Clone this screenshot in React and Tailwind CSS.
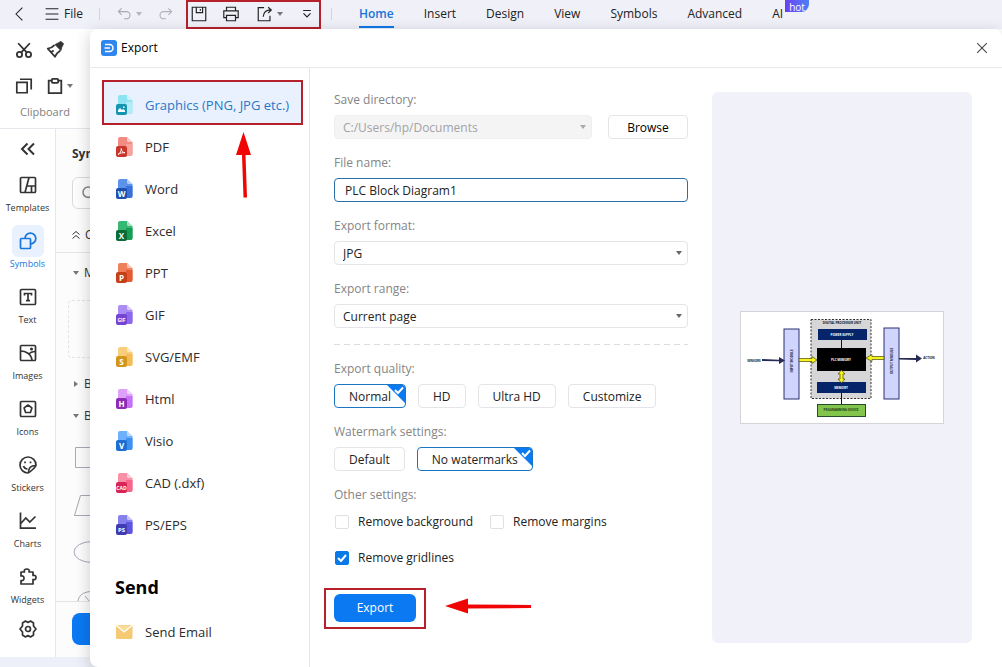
import { useState } from 'react'

const tabs = ['Home', 'Insert', 'Design', 'View', 'Symbols', 'Advanced', 'AI']

const formats = [
  { name: 'Graphics (PNG, JPG etc.)', mark: 'image', page: '#8ee3f3', side: '#b4ebf7', badge: '#1595b0' },
  { name: 'PDF', mark: 'pdf', page: '#f28b82', side: '#f6a39b', badge: '#c9372c' },
  { name: 'Word', mark: 'W', page: '#5b93ea', side: '#3a72d8', badge: '#1d4fb0' },
  { name: 'Excel', mark: 'X', page: '#35b871', side: '#169c53', badge: '#0a6b37' },
  { name: 'PPT', mark: 'P', page: '#f0805c', side: '#e55a30', badge: '#c63f1b' },
  { name: 'GIF', mark: 'GIF', page: '#ab8cf3', side: '#8d68ea', badge: '#7445d3' },
  { name: 'SVG/EMF', mark: 'S', page: '#f8ce7c', side: '#f3bc59', badge: '#d4951d' },
  { name: 'Html', mark: 'H', page: '#dda0fb', side: '#c572f4', badge: '#8c2bb5' },
  { name: 'Visio', mark: 'V', page: '#6fb0fa', side: '#3f8ff0', badge: '#1c6ed0' },
  { name: 'CAD (.dxf)', mark: 'CAD', page: '#fa8fa8', side: '#f5668a', badge: '#d92457' },
  { name: 'PS/EPS', mark: 'PS', page: '#8580ee', side: '#5c55dd', badge: '#403bb3' },
]

function Icon({ size = 20, stroke = 1.7, className = '', children }) {
  return (
    <svg
      width={size}
      height={size}
      viewBox="0 0 20 20"
      fill="none"
      stroke="currentColor"
      strokeWidth={stroke}
      className={`shrink-0 ${className}`}
    >
      {children}
    </svg>
  )
}

function Caret({ className = 'text-[#777]' }) {
  return (
    <svg width="6" height="4" viewBox="0 0 6 4" className={`shrink-0 ${className}`}>
      <path d="M0 0h6L3 4z" fill="currentColor" />
    </svg>
  )
}

const tools = [
  {
    name: 'Templates',
    icon: (
      <>
        <rect x="2.5" y="2.5" width="15" height="15" rx="1" />
        <path d="M11 2.5 7 17.5M9 11h8.5M13.5 11v6.5" />
      </>
    ),
  },
  {
    name: 'Symbols',
    icon: (
      <>
        <rect x="2.5" y="7.5" width="10" height="10" rx="1" />
        <path d="M7 7.5a5.4 5.4 0 1 1 5.6 5.4" />
      </>
    ),
  },
  {
    name: 'Text',
    icon: (
      <>
        <rect x="2.5" y="2.5" width="15" height="15" rx="1" />
        <path d="M6.5 8.5v-2h7v2M10 6.5v7M8 13.7h4" />
      </>
    ),
  },
  {
    name: 'Images',
    icon: (
      <>
        <rect x="2.5" y="2.5" width="15" height="15" rx="1" />
        <path d="M2.5 8c5 0 11 3 11.5 9.5M10.5 11.5c1.5-2 4-3 7-3" />
        <circle cx="13.5" cy="6" r=".7" fill="currentColor" />
      </>
    ),
  },
  {
    name: 'Icons',
    icon: (
      <>
        <rect x="2.5" y="2.5" width="15" height="15" rx="1" />
        <path d="m10 6 3.9 2.9-1.5 4.6H7.6L6.1 8.9z" strokeLinejoin="round" />
      </>
    ),
  },
  {
    name: 'Stickers',
    icon: (
      <>
        <path d="M18 10a8 8 0 1 0-8 8c1 0 8-6 8-8z" />
        <path d="M10.5 17.5c0-5 2.5-7 7-7M5.5 11c.7 2 2 3 4 3" />
        <path d="M7 6.5v1.8M12.5 6.5v1.8" />
      </>
    ),
  },
  {
    name: 'Charts',
    icon: <path d="M2.5 1.5v15.7H18M2.8 12.5l5-5.5 4 4 5.7-5.5" />,
  },
  {
    name: 'Widgets',
    icon: (
      <path
        d="M3 5h3.5c-2-4 6.500-4 4.500 0H15v3.5c4-1.5 4 5.5 0 4V17H3v-3.500c4 1.500 4-6 0-4.500z"
        strokeLinejoin="round"
      />
    ),
  },
]

function FileIcon({ format }) {
  const { mark, page, side, badge } = format
  const letters = mark !== 'image' && mark !== 'pdf'
  return (
    <svg width="18" height="20" viewBox="0 0 18 20" className="shrink-0">
      <path d="M5 0h7l5.5 5v12a2 2 0 0 1-2 2H5a2 2 0 0 1-2-2V2a2 2 0 0 1 2-2z" fill={page} />
      <path d="M11 7h6.5v10a2 2 0 0 1-2 2H11z" fill={side} />
      <path d="M12 0v3.5A1.5 1.5 0 0 0 13.5 5h4z" fill="#fff" opacity=".55" />
      <rect x="1" y="9" width="11" height="11" rx="2" fill={badge} />
      {mark === 'image' && (
        <path d="M3 17v-2l2-2 2 2 1.2-1 1.8 1.5V17zM8 11.5h1.500V13H8z" fill="#fff" />
      )}
      {mark === 'pdf' && (
        <path d="M3 17.5c2-1 3.500-3.500 3.200-6 .5 3 1.800 4 3.800 4.300-2.500-.3-4.500 0-7 1.700" fill="none" stroke="#fff" strokeWidth=".9" />
      )}
      {letters && (
        <text
          x="6.5"
          y={mark.length > 1 ? 16.5 : 17.5}
          textAnchor="middle"
          fontSize={mark.length > 2 ? 5 : mark.length > 1 ? 6 : 8}
          fontWeight="700"
          fill="#fff"
        >
          {mark}
        </text>
      )}
    </svg>
  )
}

function TopBar() {
  return (
    <header className="flex h-[29px] items-start bg-[#eff0f8] text-[#222]">
      <div className="flex h-[27px] w-[186px] shrink-0 items-center pl-3">
        <button aria-label="Back">
          <Icon size={16} stroke={1.3}><path d="M13 2 5 10l8 8" /></Icon>
        </button>
        <button className="ml-4 flex items-center gap-1">
          <Icon size={16} stroke={1.4}><path d="M2 3.5h16M2 10h16M2 16.5h16" /></Icon>
          File
        </button>
        <span className="ml-4 h-3 w-px bg-[#d3d5dc]" />
        <button aria-label="Undo" className="ml-4 flex items-center gap-1 text-[#a9abb3]">
          <Icon size={16} stroke={1.4}><path d="M7 3 3 7l4 4M3 7h10a4.5 4.5 0 0 1 0 9h-3" /></Icon>
          <Caret className="text-[#b5b6bc]" />
        </button>
        <button aria-label="Redo" className="ml-4 text-[#b0b2ba]">
          <Icon size={16} stroke={1.4}><path d="m13 3 4 4-4 4M17 7H7a4.5 4.5 0 0 0 0 9h3" /></Icon>
        </button>
      </div>
      <div className="flex h-[29px] w-[135px] shrink-0 items-center border-2 border-[#b5202a] pr-1 pb-[2px] pl-[2px]">
        <button aria-label="Save">
          <Icon size={18} stroke={1.3}>
            <path d="M2.5 2.5h15v15h-15zM7 2.5v6h7v-6M11.5 4.5v2" />
          </Icon>
        </button>
        <button aria-label="Print" className="ml-[14px]">
          <Icon size={18} stroke={1.3}>
            <path d="M5 6.5v-4h10v4M5 14H2V6.5h16V14h-3M5 11.5h10v6H5z" />
          </Icon>
        </button>
        <button aria-label="Share" className="ml-4 flex items-center gap-[3px]">
          <Icon size={18} stroke={1.3}>
            <path d="M9 3H2.5v14.5h13V12M8 13c.5-5 3-7.500 8.500-7.500M13.500 2.500l3.500 3-3.500 3.500" />
          </Icon>
          <Caret />
        </button>
        <button aria-label="More" className="ml-[17px]">
          <Icon size={14} stroke={1.7}><path d="M4.5 5h11M5 9l5 5 5-5" /></Icon>
        </button>
      </div>
      <span className="mt-2 ml-[10px] h-3 w-px bg-[#d3d5dc]" />
      <nav className="ml-[27px] flex h-7 gap-[30px]">
        {tabs.map((tab, i) => (
          <a
            key={tab}
            href="#"
            className={
              i === 0
                ? 'flex items-center border-b-2 border-[#0d78e8] pt-[1px] font-semibold text-[#1675d6]'
                : 'relative flex items-center border-b-2 border-transparent pt-[1px]'
            }
          >
            {tab}
            {tab === 'AI' && (
              <span className="absolute top-0 left-[13px] h-3 rounded-b-lg rounded-bl-none bg-linear-to-r from-[#6a3df0] to-[#4d7cf8] px-1 text-[10px] leading-[14px] text-white">
                hot
              </span>
            )}
          </a>
        ))}
      </nav>
    </header>
  )
}

function Ribbon() {
  return (
    <div className="flex h-[100px] shrink-0 border-b border-[#e6e7ec] bg-white pt-3 pl-[15px] text-[#333]">
      <div className="flex flex-col">
        <div className="flex h-[18px] items-center gap-[13px]">
          <button aria-label="Cut">
            <Icon size={18} stroke={2}>
              <circle cx="5" cy="15" r="2.9" />
              <circle cx="15" cy="15" r="2.9" />
              <path d="M3.5 2.5 13 12.7M16.5 2.5 7 12.7" />
            </Icon>
          </button>
          <button aria-label="Format painter">
            <Icon size={18} stroke={2}>
              <path d="M9.5 4.5C7 7 5 8 2 8.500l8 9c1-3 3-5 6-7" strokeLinejoin="round" />
              <path d="m10 4 3-1.500L16.500.500l3 2.500-2 4-1 3.500z" fill="currentColor" strokeWidth="1" />
              <path d="m5.5 12.5 3-2" />
            </Icon>
          </button>
        </div>
        <div className="mt-[18px] flex h-[18px] items-center gap-[13px]">
          <button aria-label="Copy">
            <Icon size={18} stroke={1.9}>
              <path d="M2 6h11.5v11.5H2zM5.5 2.5H18V14" />
            </Icon>
          </button>
          <button aria-label="Paste" className="flex items-center gap-[3px]">
            <Icon size={18} stroke={2}>
              <path d="M6.5 4H3v14h14V4h-3.5" />
              <rect x="6.5" y="2" width="7" height="4.5" rx="1" />
            </Icon>
            <Caret />
          </button>
        </div>
        <span className="mt-[9px] pl-[5px] text-[11px] text-[#808080]">Clipboard</span>
      </div>
    </div>
  )
}

function ToolRail() {
  return (
    <aside className="flex w-14 shrink-0 flex-col items-center border-r border-[#e6e7ec] bg-white pt-[10px] text-[#333]">
      <button aria-label="Collapse">
        <Icon size={20} stroke={2}><path d="M9.5 4.5 4 10l5.5 5.5M16 4.5 10.5 10l5.5 5.5" /></Icon>
      </button>
      <div className="mt-[10px] flex flex-col">
        {tools.map(tool => (
          <button
            key={tool.name}
            className={`flex h-14 flex-col items-center text-[9px] ${tool.name === 'Symbols' ? 'text-[#1777dc]' : ''}`}
          >
            <span
              className={`flex h-8 w-8 items-center justify-center rounded-md ${tool.name === 'Symbols' ? 'bg-[#e8f1fd]' : ''}`}
            >
              <Icon>{tool.icon}</Icon>
            </span>
            <span className="leading-[14px]">{tool.name}</span>
          </button>
        ))}
      </div>
      <button aria-label="Settings" className="mt-[2px]">
        <Icon>
          <path d="M7.5 2 10 3.5 12.500 2l3 2v3l2.500 3-2.500 3v3l-3 2-2.500-1.500L7.500 18l-3-2v-3L2 10l2.500-3V4z" strokeLinejoin="round" />
          <circle cx="10" cy="10" r="2.5" />
        </Icon>
      </button>
    </aside>
  )
}

function SymbolPanel() {
  return (
    <section className="flex w-60 flex-col bg-[#fcfcfd] text-[#333]">
      <h2 className="mt-4 pl-4 leading-[18px] font-bold">Symbols</h2>
      <div className="mt-[14px] ml-4 flex h-8 items-center rounded-md border border-[#d9dade] pl-2 text-[#888]">
        <Icon size={16} stroke={2}><circle cx="9" cy="9" r="6.5" /><path d="m14 14 4 4" /></Icon>
      </div>
      <div className="mt-2 flex h-9 items-center gap-1 border-b border-[#e3e4e8] pl-[15px]">
        <Icon size={10} stroke={2}><path d="m3 9 7-6 7 6M3 17l7-6 7 6" /></Icon>
        C
      </div>
      <div className="flex h-10 items-center gap-[5px] pl-[17px]"><Caret />M</div>
      <div className="mt-[7px] ml-3 h-[58px] rounded border border-dashed border-[#e2e3e7]" />
      <div className="mt-4 flex h-5 items-center gap-[5px] pl-[17px]">
        <span className="-rotate-90"><Caret /></span>B
      </div>
      <div className="mt-3 flex h-5 items-center gap-[5px] pl-[17px]"><Caret />B</div>
      <svg width="80" height="175" viewBox="0 0 80 175" fill="none" stroke="#a6a8b5">
        <path d="M19.5 21.5h30v20h-30zM24.5 69.5h30l-6 20h-30z" />
        <ellipse cx="36" cy="126" rx="18" ry="10.5" />
        <path d="M22 176c0-6 5-10.5 14-10.5M29 170l5 6 5-6" />
      </svg>
      <div className="border-t border-[#e3e4e8] pt-[11px] pl-4">
        <div className="h-8 rounded-lg bg-[#0a79f2]" />
      </div>
    </section>
  )
}

function FormatList() {
  return (
    <aside className="w-[220px] shrink-0 border-r border-[#e4e6ea] pt-4">
      <ul className="text-[13px] text-[#2c2c2c]">
        {formats.map((format, i) => (
          <li key={format.name} className="relative">
            <button
              className={`flex h-[42px] w-full items-center gap-3 pl-[25px] ${i === 0 ? 'text-[#2878c8]' : ''}`}
            >
              <FileIcon format={format} />
              <span className="whitespace-nowrap">{format.name}</span>
            </button>
            {i === 0 && (
              <span className="absolute -top-1 right-[6px] left-3 -z-10 h-[45px] border-2 border-[#b5202a] bg-[#eaf1fe]" />
            )}
          </li>
        ))}
      </ul>
      <h2 className="mt-[29px] pl-[25px] text-[18px] leading-6 font-bold text-black">Send</h2>
      <button className="mt-3 flex h-[42px] items-center gap-3 pl-[25px] text-[13px] text-[#2c2c2c]">
        <svg width="18" height="14" viewBox="0 0 18 14">
          <rect x="1" width="16.5" height="14" rx="1.5" fill="#f5ca72" />
          <path d="M1.5.5 9.200 7 17 .5" fill="#f9dc9c" stroke="#fff" strokeWidth="1.3" />
        </svg>
        Send Email
      </button>
    </aside>
  )
}

function Field({ label, id, children }) {
  return (
    <div className="mb-4">
      <label htmlFor={id} className="mb-[7px] block leading-4 text-[#858585]">{label}</label>
      {children}
    </div>
  )
}

function SelectBox({ id, value, disabled = false }) {
  return (
    <div className="relative flex-1">
      <select
        id={id}
        disabled={disabled}
        className={`block h-6 w-full appearance-none rounded border px-2 pt-px opacity-100 ${disabled ? 'border-[#efeff0] bg-[#f4f4f5] text-[#a3a3a3]' : 'border-[#e4e5e8] bg-white text-[#222]'}`}
      >
        <option>{value}</option>
      </select>
      <span className="pointer-events-none absolute top-[10px] right-[6px] flex">
        <Caret className={disabled ? 'text-[#aaa]' : 'text-[#666]'} />
      </span>
    </div>
  )
}

function Choice({ active, onClick, children }) {
  return (
    <button
      onClick={onClick}
      aria-pressed={active}
      className={`relative flex h-6 items-center overflow-hidden rounded border px-[14px] pt-px text-[#222] ${active ? 'border-[#1a76c2]' : 'border-[#e4e5e8]'}`}
    >
      {children}
      {active && (
        <svg width="18" height="18" viewBox="0 0 18 18" className="absolute top-0 right-0">
          <path d="M0 0h18v18z" fill="#0a79f2" />
          <path d="m8 5 3 3 5-5.5" fill="none" stroke="#fff" strokeWidth="2" />
        </svg>
      )}
    </button>
  )
}

function Check({ label, defaultChecked = false }) {
  return (
    <label className="flex h-[18px] items-center gap-2 text-[#222]">
      <span className="relative flex h-4 w-4 items-center justify-center">
        <input
          type="checkbox"
          defaultChecked={defaultChecked}
          className="peer h-[14px] w-[14px] appearance-none rounded-[2px] border border-[#dfe0e3] checked:border-[#0a79e8] checked:bg-[#0a79e8]"
        />
        <svg width="10" height="8" viewBox="0 0 10 8" className="pointer-events-none absolute hidden peer-checked:block">
          <path d="m1 4 3 3 5-6" fill="none" stroke="#fff" strokeWidth="2" />
        </svg>
      </span>
      {label}
    </label>
  )
}

function BlockDiagram() {
  return (
    <svg
      width="204"
      height="113"
      viewBox="0 0 204 113"
      className="h-auto w-full max-w-[204px]"
      fontSize="3"
      fontWeight="700"
      textAnchor="middle"
    >
      <rect x=".5" y=".5" width="203" height="112" fill="#fff" stroke="#d4d4d8" />
      <rect x="71" y="8.5" width="60" height="79" fill="#d6d6d8" stroke="#333" strokeDasharray="2 1.5" />
      <text x="102" y="12.5" fill="#111">DIGITAL PROCESSOR UNIT</text>
      <path d="M101.5 28v10M101.5 80v14" stroke="#111" />
      <rect x="78" y="18" width="49" height="11" fill="#06246a" />
      <text x="102" y="24.5" fill="#fff">POWER SUPPLY</text>
      <rect x="77" y="37" width="49" height="23" fill="#000" />
      <text x="101" y="50" fill="#fff">PLC MEMORY</text>
      <rect x="77" y="71" width="49" height="11" fill="#06246a" />
      <text x="101" y="78" fill="#fff">MEMORY</text>
      <rect x="77.5" y="93.5" width="48" height="12" fill="#83c44d" stroke="#234f2f" />
      <text x="101" y="100" fill="#173f1b">PROGRAMMING DEVICE</text>
      <rect x="44" y="18" width="15" height="70" fill="#cfd5fc" stroke="#2c3170" />
      <rect x="144" y="17" width="15" height="71" fill="#cfd5fc" stroke="#2c3170" />
      <text x="-50" y="52.5" transform="rotate(-90)" fill="#1b1e48">INPUT MODULE</text>
      <text x="-50" y="152.5" transform="rotate(-90)" fill="#1b1e48">OUTPUT MODULE</text>
      <g fill="#f6f21c" stroke="#4c4a08" strokeWidth=".7">
        <path d="M59 47.5h13v-2l5 3.5-5 3.500v-2H59zM144 45.500h-12v-2l-6 3.500 6 3.500v-2h12zM101.500 59l3.500 4h-2v5h2l-3.500 4-3.500-4h2v-5h-2z" />
      </g>
      <g fill="#272a52">
        <path d="m22 48 17 .8V46l6 3.500-6 3.500v-2.800L22 50zM159 47h17v-3.500l6 4-6 4V49l-17-.5z" />
      </g>
      <text x="14" y="50.5" fill="#111">SENSORS</text>
      <text x="189" y="48" fill="#111">ACTION</text>
    </svg>
  )
}

function ExportForm() {
  const [quality, setQuality] = useState('Normal')
  const [watermark, setWatermark] = useState('No watermarks')

  return (
    <div className="w-[354px] shrink-0">
      <Field label="Save directory:" id="directory">
        <div className="flex gap-4">
          <SelectBox id="directory" value="C:/Users/hp/Documents" disabled />
          <button className="h-6 w-20 rounded border border-[#e4e5e8] pt-px text-black">Browse</button>
        </div>
      </Field>
      <Field label="File name:" id="filename">
        <input
          id="filename"
          defaultValue="PLC Block Diagram1"
          className="block h-6 w-full rounded border border-[#2a6fa8] px-[10px] text-[#222] outline-none"
        />
      </Field>
      <Field label="Export format:" id="format">
        <SelectBox id="format" value="JPG" />
      </Field>
      <Field label="Export range:" id="range">
        <SelectBox id="range" value="Current page" />
      </Field>
      <svg width="100%" height="1" className="mb-4 block">
        <path d="M0 .5h2000" stroke="#dcdde0" strokeDasharray="6 4" />
      </svg>
      <Field label="Export quality:">
        <div className="flex gap-3">
          {['Normal', 'HD', 'Ultra HD', 'Customize'].map(q => (
            <Choice key={q} active={q === quality} onClick={() => setQuality(q)}>{q}</Choice>
          ))}
        </div>
      </Field>
      <Field label="Watermark settings:">
        <div className="flex gap-3">
          {['Default', 'No watermarks'].map(w => (
            <Choice key={w} active={w === watermark} onClick={() => setWatermark(w)}>{w}</Choice>
          ))}
        </div>
      </Field>
      <p className="leading-4 text-[#858585]">Other settings:</p>
      <div className="mt-[10px] flex gap-4">
        <Check label="Remove background" />
        <Check label="Remove margins" />
      </div>
      <div className="mt-[18px]">
        <Check label="Remove gridlines" defaultChecked />
      </div>
      <div className="relative mt-[27px] flex">
        <button className="h-7 w-[82px] rounded-md bg-[#0a79f2] text-white">Export</button>
        <span className="pointer-events-none absolute -top-[6px] -left-[10px] h-[41px] w-[102px] border-2 border-[#b5202a]" />
        <svg width="86" height="16" viewBox="0 0 86 16" className="absolute top-1 left-[111px]">
          <path d="M0 8 23 .5v6l63 .5v3l-63 .5v5z" fill="#f00505" />
        </svg>
      </div>
    </div>
  )
}

function ExportDialog() {
  return (
    <div
      role="dialog"
      aria-label="Export"
      className="absolute top-[29px] right-0 bottom-0 left-[90px] isolate flex flex-col rounded-t-lg rounded-bl-lg bg-white shadow-[0_4px_16px_rgba(0,0,0,0.2)]"
    >
      <div className="flex h-[39px] shrink-0 items-center border-b border-[#e9eaed] pr-3 pl-[11px]">
        <svg width="16" height="16" viewBox="0 0 16 16">
          <rect width="16" height="16" rx="3" fill="#2f86ee" />
          <path d="M4 4.5h4.500a3.500 3.500 0 0 1 0 7H4M3.500 8H9" fill="none" stroke="#fff" strokeWidth="1.5" />
        </svg>
        <h1 className="ml-1 text-black">Export</h1>
        <button aria-label="Close" className="ml-auto text-[#444]">
          <Icon size={16} stroke={1.3}><path d="m4 4 12 12M16 4 4 16" /></Icon>
        </button>
      </div>
      <div className="flex flex-1">
        <FormatList />
        <main className="flex flex-1 gap-6 pt-6 pr-[30px] pb-6 pl-6">
          <ExportForm />
          <div className="flex flex-1 items-center justify-center rounded-md bg-[#f1f2f9]">
            <BlockDiagram />
          </div>
        </main>
      </div>
      <svg width="20" height="66" viewBox="0 0 20 66" className="absolute top-[103px] left-[145px]">
        <path d="M8.5 0 16 23h-5.5l1.500 42.500H8.500L7 23H1z" fill="#f00505" />
      </svg>
    </div>
  )
}

export default function App() {
  return (
    <div className="relative flex min-h-screen flex-col overflow-hidden bg-white font-['Open_Sans',sans-serif] text-[12px] leading-4">
      <TopBar />
      <Ribbon />
      <div className="flex flex-1">
        <ToolRail />
        <SymbolPanel />
      </div>
      <footer className="h-[10px] bg-[#edf0f8]" />
      <ExportDialog />
    </div>
  )
}
